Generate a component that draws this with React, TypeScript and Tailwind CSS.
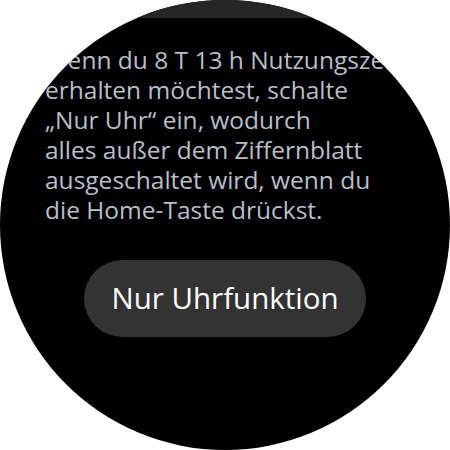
import React from "react";

export default function App() {
  const lines = [
    "Wenn du 8 T 13 h Nutzungszeit",
    "erhalten möchtest, schalte",
    "„Nur Uhr“ ein, wodurch",
    "alles außer dem Ziffernblatt",
    "ausgeschaltet wird, wenn du",
    "die Home-Taste drückst.",
  ];
  return (
    <div className="w-[450px] h-[450px] bg-white">
      <div
        className="w-[450px] h-[450px] rounded-full bg-black overflow-hidden flex flex-col"
        style={{ fontFamily: '"Open Sans", "Noto Sans", sans-serif' }}
      >
        <div className="h-[18px] bg-[#262626] shrink-0" />
        <div className="pl-[45px] pt-[27px] text-[24.5px] leading-[30px] text-[#b7bfc7] whitespace-nowrap">
          {lines.map((l, i) => (
            <div key={i}>{l}</div>
          ))}
        </div>
        <div className="pl-[84px] pt-[35px]">
          <div className="w-[282px] h-[77px] rounded-full bg-[#333333] flex items-center justify-center text-white text-[29.5px]">
            Nur Uhrfunktion
          </div>
        </div>
      </div>
    </div>
  );
}
